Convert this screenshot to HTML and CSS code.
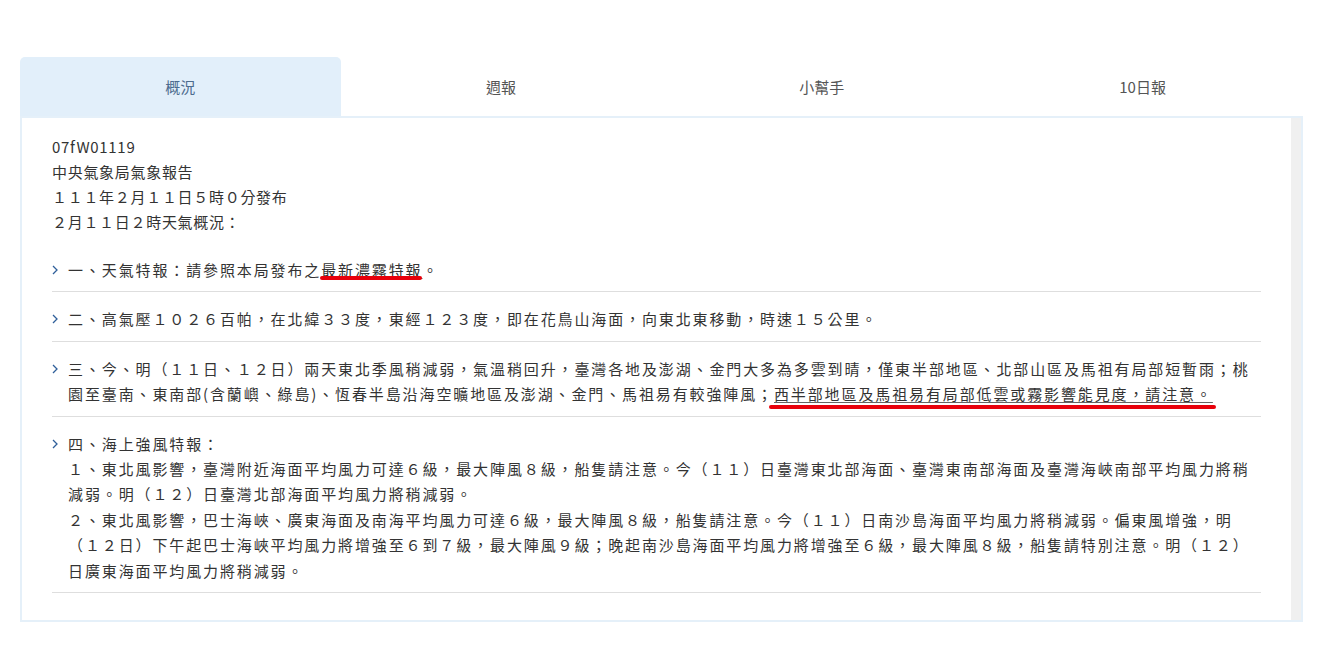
FILE: index.html
```html
<!DOCTYPE html>
<html lang="zh-Hant">
<head>
    <meta charset="utf-8" />
    <meta name="viewport" content="width=device-width, initial-scale=1.0">
    <link rel="stylesheet" href="styles.css">
    <title>天氣概況</title>
</head>
<body>
    <div class="forecast">
        <div class="tabs">
            <div class="tab active">概況</div>
            <div class="tab">週報</div>
            <div class="tab">小幫手</div>
            <div class="tab">10日報</div>
        </div>

        <div class="panel">
            <div class="panel-body">
                <div class="report-head">
                    <div class="code">07fW01119</div>
                    <div>中央氣象局氣象報告</div>
                    <div>１１１年２月１１日５時０分發布</div>
                    <div>２月１１日２時天氣概況：</div>
                </div>

                <ul class="items">
                    <li class="item">
                        <svg class="chevron" viewBox="0 0 6 10"><polyline points="1,1 5,5 1,9" /></svg>
                        <div class="item-text">一、天氣特報：請參照本局發布之<span class="link mark">最新濃霧特報</span>。</div>
                    </li>
                    <li class="item">
                        <svg class="chevron" viewBox="0 0 6 10"><polyline points="1,1 5,5 1,9" /></svg>
                        <div class="item-text">二、高氣壓１０２６百帕，在北緯３３度，東經１２３度，即在花鳥山海面，向東北東移動，時速１５公里。</div>
                    </li>
                    <li class="item">
                        <svg class="chevron" viewBox="0 0 6 10"><polyline points="1,1 5,5 1,9" /></svg>
                        <div class="item-text">三、今、明（１１日、１２日）兩天東北季風稍減弱，氣溫稍回升，臺灣各地及澎湖、金門大多為多雲到晴，僅東半部地區、北部山區及馬祖有局部短暫雨；桃園至臺南、東南部(含蘭嶼、綠島)、恆春半島沿海空曠地區及澎湖、金門、馬祖易有較強陣風；<span class="link mark mark-low">西半部地區及馬祖易有局部低雲或霧影響能見度，請注意。</span></div>
                    </li>
                    <li class="item">
                        <svg class="chevron" viewBox="0 0 6 10"><polyline points="1,1 5,5 1,9" /></svg>
                        <div class="item-text">四、海上強風特報：<br>１、東北風影響，臺灣附近海面平均風力可達６級，最大陣風８級，船隻請注意。今（１１）日臺灣東北部海面、臺灣東南部海面及臺灣海峽南部平均風力將稍減弱。明（１２）日臺灣北部海面平均風力將稍減弱。<br>２、東北風影響，巴士海峽、廣東海面及南海平均風力可達６級，最大陣風８級，船隻請注意。今（１１）日南沙島海面平均風力將稍減弱。偏東風增強，明（１２日）下午起巴士海峽平均風力將增強至６到７級，最大陣風９級；晚起南沙島海面平均風力將增強至６級，最大陣風８級，船隻請特別注意。明（１２）日廣東海面平均風力將稍減弱。</div>
                    </li>
                </ul>
            </div>
            <div class="scroll-track"></div>
        </div>
    </div>
</body>
</html>
```

FILE: styles.css
```css
body {
    margin: 0;
    background-color: #fff;
    font-family: "Noto Sans CJK TC", "Liberation Sans", sans-serif;
    color: #333;
}

.forecast {
    width: 1283px;
    margin: 57px 0 0 20px;
}

.tabs {
    display: grid;
    grid-template-columns: repeat(4, 1fr);
    height: 59px;
}

.tab {
    display: flex;
    justify-content: center;
    align-items: center;
    font-size: 15px;
    color: #555;
}

.tab.active {
    background-color: #e2effa;
    border-radius: 5px 5px 0 0;
    color: #4d6c8e;
}

.panel {
    display: flex;
    height: 506px;
    box-sizing: border-box;
    border: 2px solid #e5f0f9;
}

.panel-body {
    flex: 1;
    padding: 16px 30px 0 30px;
}

.scroll-track {
    width: 10px;
    background-color: #f0f0f0;
}

.report-head {
    font-size: 15px;
    line-height: 25px;
    letter-spacing: 0.7px;
    margin-bottom: 9px;
}

.items {
    list-style: none;
    margin: 0;
    padding: 0;
}

.item {
    display: flex;
    padding: 14px 0 9px;
    border-bottom: 1px solid #dedede;
}

.chevron {
    flex: none;
    width: 6px;
    height: 10px;
    margin: 8px 10px 0 0;
    fill: none;
    stroke: #2f5f9a;
    stroke-width: 1.3;
}

.item-text {
    flex: 1;
    font-size: 15px;
    line-height: 25.4px;
    letter-spacing: 1.88px;
}

.link {
    text-decoration: underline;
    text-decoration-color: #666;
    text-underline-offset: 2px;
}

.mark {
    position: relative;
}

.mark::after {
    content: "";
    position: absolute;
    left: -1px;
    right: 0;
    bottom: 0;
    height: 4px;
    border-radius: 2px;
    background-color: #e8000b;
}

.mark-low::after {
    left: -5px;
    right: -3px;
    bottom: -5px;
}
```
